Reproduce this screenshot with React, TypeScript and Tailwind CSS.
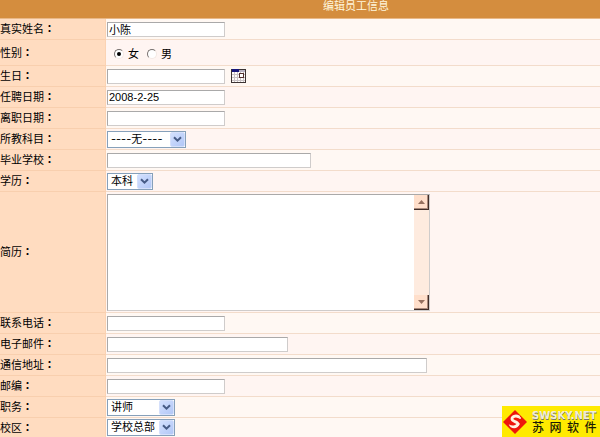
import { useState } from 'react'
import type { ReactNode } from 'react'
import clsx from 'clsx'

const INPUT =
  'block h-[15px] max-w-full bg-white border border-t-[#aaa9a9] border-l-[#aaa9a9] border-r-[#cfcccb] border-b-[#cfcccb] pl-px text-[11px] leading-[13px] text-black outline-none'

type RowProps = {
  label: string
  htmlFor?: string
  height?: string
  tint?: boolean
  last?: boolean
  children: ReactNode
}

function Row({ label, htmlFor, height = 'h-[21px]', tint, last, children }: RowProps) {
  return (
    <div className={clsx('flex', height)}>
      <div
        className={clsx(
          'flex w-[106px] shrink-0 items-center border-r border-r-[#fbd3b3] bg-[#ffdcc0]',
          !last && 'border-b border-b-[#f8cfae]',
        )}
      >
        <label htmlFor={htmlFor}>
          {label}
          <span className="font-['Noto_Sans_CJK_TC',sans-serif] font-bold">：</span>
        </label>
      </div>
      <div
        className={clsx(
          'flex min-w-0 flex-1 items-center pl-px',
          tint ? 'bg-[#fff5f2]' : 'bg-[#fff8f3]',
          !last && 'border-b border-b-[#f3dccb]',
        )}
      >
        {children}
      </div>
    </div>
  )
}

function Select({ id, width, options }: { id: string; width: string; options: string[] }) {
  return (
    <div className={clsx('relative h-[17px]', width)}>
      <select
        id={id}
        className="block h-full w-full appearance-none border border-[#86a0ba] bg-white pl-[3px] font-['Inter','Noto_Sans_CJK_SC',sans-serif] text-[11px] leading-[15px] text-black outline-none"
      >
        {options.map((option) => (
          <option key={option}>{option}</option>
        ))}
      </select>
      <span className="pointer-events-none absolute top-px right-px flex h-[15px] w-[15px] items-center justify-center rounded-xs border border-[#d5e0fb] bg-linear-to-br from-[#d3e0fe] to-[#b2c7f6]">
        <svg width="9" height="7" viewBox="0 0 9 7" fill="none">
          <path d="M1 1.2 4.5 4.7 8 1.2" stroke="#465b86" strokeWidth="2" />
        </svg>
      </span>
    </div>
  )
}

function ScrollButton({ label, up }: { label: string; up?: boolean }) {
  return (
    <button
      type="button"
      aria-label={label}
      className="flex h-[15px] w-[15px] items-center justify-center border-r border-b border-[#3f2d28] bg-[#ffdfcb] shadow-[inset_-1px_-1px_0_#a98a7c]"
    >
      <svg width="7" height="4" viewBox="0 0 7 4" fill="#95705f">
        <path d={up ? 'M0 4 3.5 0 7 4Z' : 'M0 0 3.5 4 7 0Z'} />
      </svg>
    </button>
  )
}

function CalendarIcon() {
  return (
    <svg width="15" height="14" viewBox="0 0 15 14">
      <rect width="15" height="14" fill="#3c3434" />
      <rect x="1" y="1" width="13" height="12" fill="#fffdfb" />
      <rect x="1" width="7" height="3" fill="#17177c" />
      <rect x="8" y="1" width="6" height="2" fill="#b9b4c4" />
      <path d="M3.5 3v10M6.5 3v10M9.5 3v10M12.5 3v10M1 5.5h13M1 8.5h13M1 11.5h13" stroke="#c9c3c6" />
      <rect x="8.5" y="4.5" width="4" height="4" fill="#fff" stroke="#52302f" />
    </svg>
  )
}

function Logo() {
  return (
    <div className="absolute right-0 bottom-0 flex h-[31px] w-[98px] items-center bg-[#ffea00] pl-px">
      <svg width="24" height="24" viewBox="0 0 24 24" className="shrink-0">
        <path d="M12 0 24 12 12 24 0 12Z" fill="#ee160c" />
        <path
          d="M15.6 6.8C12.6 5 8.8 6.6 9 9.2 9.2 11.8 15 11.4 15 14.2"
          fill="none"
          stroke="#fff3e2"
          strokeWidth="2.8"
          strokeLinecap="round"
        />
        <path d="M5.8 14.2C7 19.6 15.4 20 16.8 13.6 14.4 12.4 13.4 14.6 11.4 15.2 9.4 15.8 7.6 15.2 5.8 14.2Z" fill="#fff3e2" />
        <circle cx="17" cy="8" r="1" fill="#fff3e2" />
      </svg>
      <div className="flex-1 pt-[3px] pr-1 pl-[5px]">
        <div className="font-['DejaVu_Sans',sans-serif] text-[10px] leading-[11px] font-bold whitespace-nowrap text-[#efedda] [text-shadow:0_1px_0_#77766c]">
          SWSKY.NET
        </div>
        <div className="flex justify-between text-[12px] leading-[15px] font-medium text-[#1d1a05]">
          <span>苏</span>
          <span>网</span>
          <span>软</span>
          <span>件</span>
        </div>
      </div>
    </div>
  )
}

export default function App() {
  const [gender, setGender] = useState('女')

  return (
    <form className="relative w-full overflow-hidden bg-[#fff8f3] font-['Liberation_Sans','Noto_Sans_CJK_SC',sans-serif] text-[11px] leading-[15px] text-black">
      <h1 className="flex h-[19px] items-start justify-center border-b border-[#e9b887] bg-[#d48d3e] pl-[112px] text-[11px] leading-[13px] text-[#fff6dc]">
        编辑员工信息
      </h1>

      <Row label="真实姓名" htmlFor="name">
        <input id="name" defaultValue="小陈" className={clsx(INPUT, 'w-[118px]')} />
      </Row>
      <Row label="性别" height="h-[26px]" tint>
        <div className="flex gap-2 pt-[3px] pl-[7px]">
          {['女', '男'].map((value) => (
            <label key={value} className="flex items-center gap-1">
              <input
                type="radio"
                name="gender"
                checked={gender === value}
                onChange={() => setGender(value)}
                className="flex size-[10px] appearance-none items-center justify-center rounded-full border border-t-[#77706e] border-r-[#f3e9e4] border-b-[#f3e9e4] border-l-[#77706e] bg-white before:size-1 before:rounded-full checked:before:bg-black"
              />
              {value}
            </label>
          ))}
        </div>
      </Row>
      <Row label="生日" htmlFor="birthday">
        <div className="flex items-center gap-[6px]">
          <input id="birthday" className={clsx(INPUT, 'w-[118px]')} />
          <button type="button" aria-label="选择日期">
            <CalendarIcon />
          </button>
        </div>
      </Row>
      <Row label="任聘日期" htmlFor="hired" tint>
        <input id="hired" defaultValue="2008-2-25" className={clsx(INPUT, 'w-[118px]')} />
      </Row>
      <Row label="离职日期" htmlFor="left">
        <input id="left" className={clsx(INPUT, 'w-[118px]')} />
      </Row>
      <Row label="所教科目" htmlFor="subject" tint>
        <Select id="subject" width="w-[79px]" options={['----无----']} />
      </Row>
      <Row label="毕业学校" htmlFor="school">
        <input id="school" className={clsx(INPUT, 'w-[204px]')} />
      </Row>
      <Row label="学历" htmlFor="degree" tint>
        <Select id="degree" width="w-[46px]" options={['本科']} />
      </Row>
      <Row label="简历" htmlFor="resume" height="h-[121px]" tint>
        <div className="flex h-[117px] w-[323px] border border-t-[#aaa9a9] border-r-[#cfcccb] border-b-[#cfcccb] border-l-[#aaa9a9] bg-white">
          <textarea id="resume" className="block min-w-0 flex-1 resize-none px-px outline-none" />
          <div className="flex flex-col justify-between bg-[#feebdf]">
            <ScrollButton label="向上" up />
            <ScrollButton label="向下" />
          </div>
        </div>
      </Row>
      <Row label="联系电话" htmlFor="phone">
        <input id="phone" className={clsx(INPUT, 'w-[118px]')} />
      </Row>
      <Row label="电子邮件" htmlFor="email" tint>
        <input id="email" className={clsx(INPUT, 'w-[181px]')} />
      </Row>
      <Row label="通信地址" htmlFor="address">
        <input id="address" className={clsx(INPUT, 'w-[320px]')} />
      </Row>
      <Row label="邮编" htmlFor="zip" tint>
        <input id="zip" className={clsx(INPUT, 'w-[118px]')} />
      </Row>
      <Row label="职务" htmlFor="position">
        <Select id="position" width="w-[68px]" options={['讲师']} />
      </Row>
      <Row label="校区" htmlFor="campus" height="h-[19px]" last>
        <Select id="campus" width="w-[68px]" options={['学校总部']} />
      </Row>

      <Logo />
    </form>
  )
}
